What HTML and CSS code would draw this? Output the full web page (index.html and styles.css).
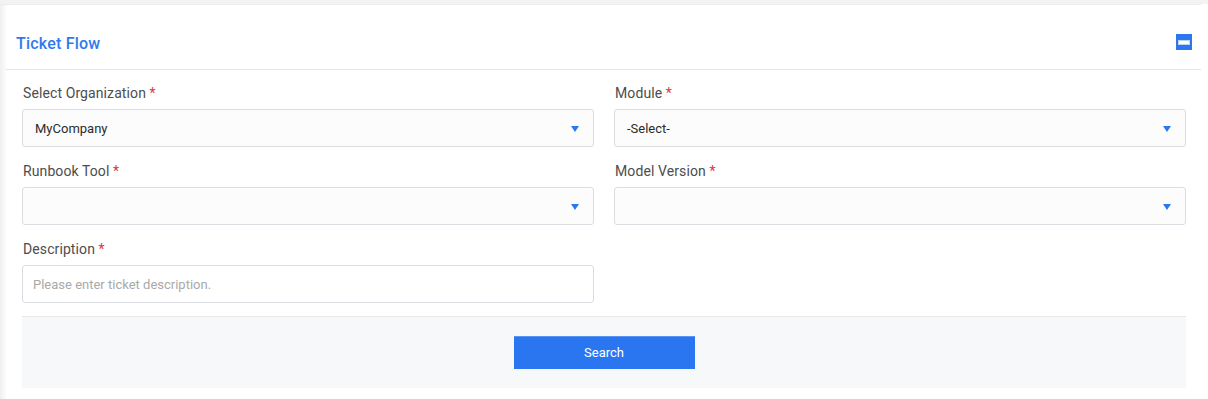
FILE: index.html
```html
<!DOCTYPE html>
<html lang="en">
<head>
<meta charset="utf-8">
<title>Ticket Flow</title>
<link rel="stylesheet" href="styles.css">
</head>
<body>
<div class="page">
  <div class="panel">
    <div class="panel-header">
      <h2 class="panel-title">Ticket Flow</h2>
      <button class="collapse-btn" type="button" aria-label="Collapse"><span class="bar"></span></button>
    </div>
    <form class="panel-body">
      <div class="grid">
        <div class="field">
          <label class="label">Select Organization <span class="req">*</span></label>
          <div class="select"><span class="value">MyCompany</span><span class="caret"></span></div>
        </div>
        <div class="field">
          <label class="label">Module <span class="req">*</span></label>
          <div class="select"><span class="value">-Select-</span><span class="caret"></span></div>
        </div>
        <div class="field">
          <label class="label">Runbook Tool <span class="req">*</span></label>
          <div class="select"><span class="value"></span><span class="caret"></span></div>
        </div>
        <div class="field">
          <label class="label">Model Version <span class="req">*</span></label>
          <div class="select"><span class="value"></span><span class="caret"></span></div>
        </div>
        <div class="field">
          <label class="label">Description <span class="req">*</span></label>
          <input class="input" type="text" placeholder="Please enter ticket description.">
        </div>
      </div>
      <div class="footer">
        <button class="search-btn" type="button">Search</button>
      </div>
    </form>
  </div>
</div>
</body>
</html>
```
FILE: styles.css
```css
* { box-sizing: border-box; }
html, body { margin: 0; padding: 0; }
body {
  font-family: Roboto, "Liberation Sans", Arial, sans-serif;
  background: #fff;
  color: #333;
}
.page {
  height: 399px;
  border-top: 4px solid #f3f3f3;
  background: linear-gradient(to right, #efefef 0, #f8f8f8 4px, #fff 9px);
  padding-left: 6px;
  padding-right: 7px;
}
.page::before {
  content: "";
  display: block;
  height: 1px;
  background: #ececec;
  margin-left: -6px;
}
.panel {
  background: #fff;
}
.panel-header {
  display: flex;
  align-items: center;
  justify-content: space-between;
  padding: 27px 9px 13px 10px;
  border-bottom: 1px solid #e6e6e6;
}
.panel-title {
  margin: 0;
  font-size: 16px;
  line-height: 24px;
  font-weight: 500;
  letter-spacing: 0.2px;
  color: #2f7af0;
}
.collapse-btn {
  width: 16px;
  height: 16px;
  padding: 0;
  border: 0;
  background: #2b77ef;
  display: flex;
  align-items: center;
  justify-content: center;
  margin-top: -4px;
}
.collapse-btn .bar {
  width: 10px;
  height: 3px;
  background: #fff;
  box-shadow: 0 0 0 1px #bcd3fb;
}
.panel-body {
  padding: 15px 15px 11px 16px;
  margin: 0;
}
.grid {
  display: grid;
  grid-template-columns: 1fr 1fr;
  column-gap: 20px;
  row-gap: 16px;
}
.field {
  display: flex;
  flex-direction: column;
}
.label {
  font-size: 14px;
  line-height: 17px;
  letter-spacing: 0.1px;
  color: #4d4d4d;
  margin: 0 0 7px 1px;
}
.req { color: #e0343a; }
.select {
  height: 38px;
  border: 1px solid #dadde1;
  border-radius: 3px;
  background: #fcfcfc;
  display: flex;
  align-items: center;
  justify-content: space-between;
  padding: 0 14px 0 12px;
}
.value {
  font-size: 13px;
  color: #2b2b2b;
}
.caret {
  width: 0;
  height: 0;
  border-left: 4px solid transparent;
  border-right: 4px solid transparent;
  border-top: 6px solid #2a76f0;
  margin-top: 1px;
}
.input {
  height: 38px;
  border: 1px solid #dadde1;
  border-radius: 3px;
  background: #fff;
  padding: 0 10px;
  font-family: inherit;
  font-size: 13px;
  color: #333;
  outline: none;
}
.input::placeholder { color: #a9a9a9; }
.footer {
  margin-top: 13px;
  border-top: 1px solid #e7e8ea;
  background: #f7f8fa;
  height: 72px;
  display: flex;
  justify-content: center;
  padding-top: 19px;
}
.search-btn {
  width: 181px;
  height: 33px;
  border: 0;
  border-top: 1px solid #5a95f3;
  background: #2a76f0;
  color: #fff;
  font-family: inherit;
  font-size: 13px;
  padding: 0 0 2px;
}
```
